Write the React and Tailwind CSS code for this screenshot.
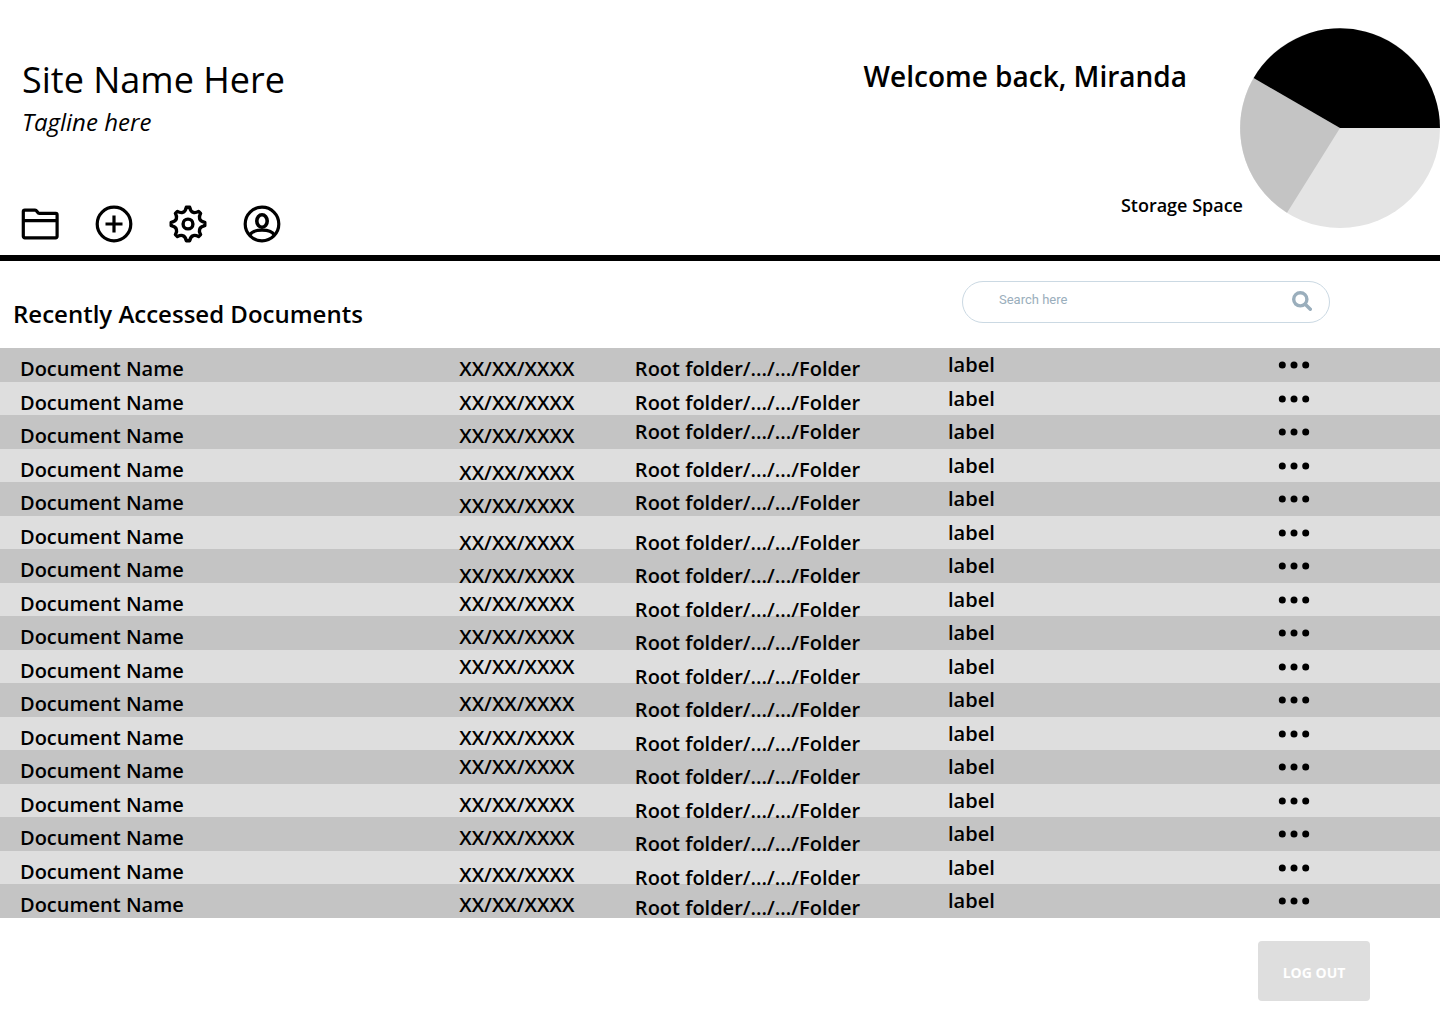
const BASE = 'pt-2';
const RAISED = 'pt-1';
const LOWERED = 'pt-[11px]';
const DROPPED = 'pt-[14px]';

const documents = [
  [BASE, BASE],
  [BASE, BASE],
  [BASE, RAISED],
  [LOWERED, BASE],
  [LOWERED, BASE],
  [DROPPED, DROPPED],
  [DROPPED, DROPPED],
  [BASE, DROPPED],
  [BASE, DROPPED],
  [RAISED, DROPPED],
  [BASE, DROPPED],
  [BASE, DROPPED],
  [RAISED, DROPPED],
  [BASE, DROPPED],
  [BASE, DROPPED],
  [LOWERED, DROPPED],
  [BASE, LOWERED],
];

function Folder() {
  return (
    <svg viewBox="0 0 38 38" className="size-[38px]" fill="none" stroke="black" strokeWidth="3.200" aria-hidden="true">
      <path d="M2.300 6.600a1.500 1.500 0 0 1 1.500-1.500h10.300c2 0 2.200 3.300 4.200 3.300h16.500a1.300 1.300 0 0 1 1.300 1.300v21.600a1.500 1.500 0 0 1-1.500 1.500h-30.800a1.500 1.500 0 0 1-1.500-1.500zM2.300 15.700h33.800" />
    </svg>
  );
}

function Plus() {
  return (
    <svg viewBox="0 0 38 38" className="size-[38px]" fill="none" stroke="black" strokeWidth="3.200" aria-hidden="true">
      <circle cx="19" cy="19" r="16.800" />
      <path d="M19 10.500v17M10.500 19h17" />
    </svg>
  );
}

function Gear() {
  return (
    <svg viewBox="0 0 38 38" className="size-[38px]" fill="none" stroke="black" strokeWidth="3.400" strokeLinejoin="round" aria-hidden="true">
      <path d="M17.300 2.200h3.400Q21.500 6.500 24.300 7.400Q26.500 8.200 29.600 6.400L31.600 8.400Q29.800 11.500 30.600 13.700Q31.500 16.500 35.800 17.300v3.400Q31.500 21.500 30.600 24.300Q29.800 26.500 31.600 29.600L29.600 31.600Q26.500 29.800 24.300 30.600Q21.500 31.500 20.700 35.800h-3.400Q16.500 31.500 13.700 30.600Q11.500 29.800 8.400 31.600L6.400 29.600Q8.200 26.500 7.400 24.300Q6.500 21.500 2.200 20.700v-3.400Q6.500 16.500 7.400 13.700Q8.200 11.500 6.400 8.400L8.400 6.400Q11.500 8.200 13.700 7.400Q16.500 6.500 17.300 2.200z" />
      <circle cx="19" cy="19" r="4.900" />
    </svg>
  );
}

function Account() {
  return (
    <svg viewBox="0 0 38 38" className="size-[38px]" fill="none" stroke="black" strokeWidth="3.200" aria-hidden="true">
      <circle cx="19" cy="19" r="16.800" />
      <ellipse cx="19" cy="16" rx="5.200" ry="6.200" strokeWidth="3.600" />
      <path d="M6.800 30c1.600-3.400 6.700-4.800 12.200-4.800s10.600 1.400 12.200 4.800" />
    </svg>
  );
}

const actions = [
  ['Folders', Folder],
  ['Add', Plus],
  ['Settings', Gear],
  ['Account', Account],
];

function Cell({ align = BASE, children }) {
  return (
    <td className="p-0 pl-5 align-top">
      <div className={`h-[33px] leading-[26px] whitespace-nowrap ${align}`}>{children}</div>
    </td>
  );
}

export default function App() {
  return (
    <div className="min-h-screen bg-white font-['Open_Sans',sans-serif] text-black">
      <header className="flex justify-between border-b-[6px] border-black pt-7">
        <div className="flex flex-col justify-between pb-3 pl-[21px]">
          <div className="pt-[27px] pl-px">
            <h1 className="text-4xl leading-[50px]">Site Name Here</h1>
            <p className="text-2xl leading-[34px] italic">Tagline here</p>
          </div>
          <nav className="flex gap-9">
            {actions.map(([name, Icon]) => (
              <button key={name} type="button" aria-label={name}>
                <Icon />
              </button>
            ))}
          </nav>
        </div>
        <div className="flex pb-[27px]">
          <div className="flex flex-col items-end justify-between pt-[27px] pb-[9px]">
            <p className="pr-[56px] text-[28px] leading-[42px] font-semibold">Welcome back, Miranda</p>
            <p className="text-lg leading-7 font-semibold">Storage Space</p>
          </div>
          <svg viewBox="0 0 200 200" className="-ml-[3px] size-[200px]" role="img" aria-label="Storage space">
            <circle cx="100" cy="100" r="100" fill="#e4e4e4" />
            <path d="M100 100 47 184.800A100 100 0 0 1 13.600 50z" fill="#c4c4c4" />
            <path d="M100 100 13.600 50A100 100 0 0 1 200 100z" fill="#000" />
          </svg>
        </div>
      </header>

      <main>
        <div className="flex items-start justify-between pt-5 pr-[110px] pl-[13px]">
          <h2 className="pt-[15px] pb-4 text-2xl leading-9 font-semibold">Recently Accessed Documents</h2>
          <form role="search" className="flex h-[42px] w-[368px] items-center rounded-full border border-[#cbd9e3] pr-[17px] pb-0.5 pl-9" onSubmit={(e) => e.preventDefault()}>
            <input type="search" aria-label="Search" placeholder="Search here" className="min-w-0 flex-1 pb-0.5 font-[Roboto] text-[13px] outline-none placeholder:text-[#9aaebc]" />
            <button type="submit" aria-label="Search">
              <svg viewBox="0 0 20 20" className="size-5" fill="none" stroke="#9aaebc" strokeWidth="3.400" strokeLinecap="round" aria-hidden="true">
                <circle cx="8.300" cy="8.300" r="6.600" />
                <path d="m13.500 13.500 4.800 4.800" />
              </svg>
            </button>
          </form>
        </div>

        <table className="w-full table-fixed border-collapse text-left text-xl font-semibold">
          <colgroup>
            <col className="w-[30.5%]" />
            <col className="w-[12.2%]" />
            <col className="w-[21.75%]" />
            <col className="w-[22.9%]" />
            <col />
          </colgroup>
          <tbody>
            {documents.map(([dateAlign, folderAlign], i) => (
              <tr key={i} className="h-[33px] bg-[#dedede] odd:h-[34px] odd:bg-[#c4c4c4]">
                <Cell>Document Name</Cell>
                <Cell align={dateAlign}>XX/XX/XXXX</Cell>
                <Cell align={folderAlign}>Root folder/.../.../Folder</Cell>
                <Cell align={RAISED}>label</Cell>
                <Cell align="pt-0">
                  <button type="button" aria-label="More options" className="flex h-[33px] items-center">
                    <svg viewBox="0 0 32 8" className="h-2 w-8" aria-hidden="true">
                      <circle cx="4.300" cy="4" r="3.500" />
                      <circle cx="16" cy="4" r="3.500" />
                      <circle cx="27.700" cy="4" r="3.500" />
                    </svg>
                  </button>
                </Cell>
              </tr>
            ))}
          </tbody>
        </table>
      </main>

      <footer className="flex justify-end pt-[23px] pr-[70px]">
        <button type="button" className="h-[60px] w-28 rounded-sm bg-[#dedede] pt-1 text-sm font-bold text-white">
          LOG OUT
        </button>
      </footer>
    </div>
  );
}
